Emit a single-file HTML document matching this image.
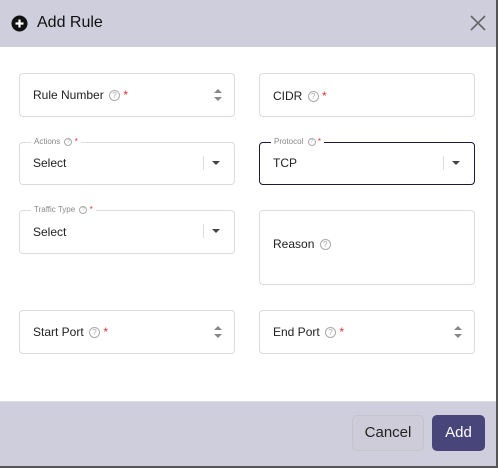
<!DOCTYPE html>
<html><head><style>
*{margin:0;padding:0;box-sizing:border-box}
body{width:498px;height:468px;overflow:hidden;background:#fff;font-family:"Liberation Sans",sans-serif;position:relative}
.hdr{position:absolute;left:0;top:0;width:496px;height:47px;background:#cfcedc}
.ftr{position:absolute;left:0;top:401px;width:496px;height:65px;background:#cfcedc;border-top:1px solid #dcdce4}
.rb{position:absolute;right:0;top:0;width:2px;height:468px;background:#555}
.bb{position:absolute;left:0;bottom:0;width:498px;height:2px;background:#555}
.f{position:absolute;border:1px solid #dcdcdc;border-radius:4px;background:#fff}
.lbl{position:absolute;font-size:12px;color:#222}
.q{display:inline-block;width:11px;height:11px;border:1px solid #aaa;border-radius:50%;font-size:8px;color:#aaa;text-align:center;line-height:9px;vertical-align:middle;margin-left:2px}
.s{color:#d33}
.leg{position:absolute;top:-6px;left:11px;background:#fff;padding:0 3px;font-size:8px;color:#888}
.sel{position:absolute;left:13px;font-size:12px;color:#222}
.sep{position:absolute;right:30px;top:13px;width:1px;height:14px;background:#ddd}
.ar{position:absolute;right:14px;top:18px;border-left:4px solid transparent;border-right:4px solid transparent;border-top:4px solid #444}
.sp{position:absolute;right:12px;top:14px;width:8px;height:14px}
</style></head><body>
<div class="hdr">
<svg style="position:absolute;left:11px;top:15px" width="17" height="17" viewBox="0 0 17 17"><circle cx="8.5" cy="8.5" r="8" fill="#111"/><path d="M8.5 4.5v8M4.5 8.5h8" stroke="#fff" stroke-width="2.2"/></svg>
<div style="position:absolute;left:37px;top:14px;font-size:16px;color:#111">Add Rule</div>
<svg style="position:absolute;left:470px;top:15px" width="16" height="16" viewBox="0 0 16 16"><path d="M1 1L15 15M15 1L1 15" stroke="#666" stroke-width="1.6"/></svg>
</div>

<div class="f" style="left:19px;top:73px;width:216px;height:44px"><div class="lbl" style="left:13px;top:14px">Rule Number <span class="q">?</span> <span class="s">*</span></div><svg class="sp" viewBox="0 0 8 14"><path d="M0 5L4 1L8 5ZM0 9L4 13L8 9Z" fill="#888"/></svg></div>
<div class="f" style="left:259px;top:73px;width:216px;height:44px"><div class="lbl" style="left:13px;top:15px">CIDR <span class="q">?</span> <span class="s">*</span></div></div>

<div class="f" style="left:19px;top:142px;width:216px;height:43px"><div class="leg">Actions <span class="q" style="width:8px;height:8px;font-size:5px;line-height:6px">?</span> <span class="s">*</span></div><div class="sel" style="top:13px">Select</div><div class="sep"></div><div class="ar"></div></div>
<div class="f" style="left:259px;top:142px;width:216px;height:43px;border-color:#1a1a3a"><div class="leg">Protocol <span class="q" style="width:8px;height:8px;font-size:5px;line-height:6px">?</span> <span class="s">*</span></div><div class="sel" style="top:13px">TCP</div><div class="sep"></div><div class="ar"></div></div>

<div class="f" style="left:19px;top:210px;width:216px;height:44px"><div class="leg">Traffic Type <span class="q" style="width:8px;height:8px;font-size:5px;line-height:6px">?</span> <span class="s">*</span></div><div class="sel" style="top:14px">Select</div><div class="sep"></div><div class="ar"></div></div>
<div class="f" style="left:259px;top:210px;width:216px;height:75px"><div class="lbl" style="left:13px;top:26px">Reason <span class="q">?</span></div></div>

<div class="f" style="left:19px;top:310px;width:216px;height:44px"><div class="lbl" style="left:13px;top:14px">Start Port <span class="q">?</span> <span class="s">*</span></div><svg class="sp" viewBox="0 0 8 14"><path d="M0 5L4 1L8 5ZM0 9L4 13L8 9Z" fill="#888"/></svg></div>
<div class="f" style="left:259px;top:310px;width:216px;height:44px"><div class="lbl" style="left:13px;top:14px">End Port <span class="q">?</span> <span class="s">*</span></div><svg class="sp" viewBox="0 0 8 14"><path d="M0 5L4 1L8 5ZM0 9L4 13L8 9Z" fill="#888"/></svg></div>

<div class="ftr">
<div style="position:absolute;left:352px;top:13px;width:72px;height:36px;border:1px solid #c4c4cc;border-radius:5px;background:#cdccd8;font-size:15px;color:#222;text-align:center;line-height:34px">Cancel</div>
<div style="position:absolute;left:432px;top:13px;width:53px;height:36px;border-radius:5px;background:#48457a;font-size:15px;color:#fff;text-align:center;line-height:36px">Add</div>
</div>
<div class="rb"></div><div class="bb"></div>
</body></html>
